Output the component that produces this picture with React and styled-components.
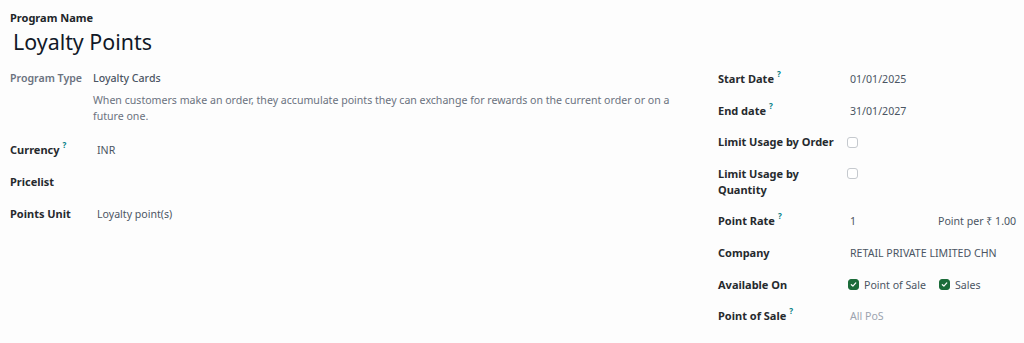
import React from "react";
import styled, { createGlobalStyle } from "styled-components";

const GlobalStyle = createGlobalStyle`
  html, body {
    margin: 0;
    padding: 0;
    background: #fdfdfd;
  }
  body {
    font-family: "Noto Sans", "Open Sans", sans-serif;
    font-size: 11px;
    color: #374151;
  }
`;

const Sheet = styled.div`
  width: 1024px;
  height: 343px;
  box-sizing: border-box;
  padding: 11px 10px 0 10px;
  background: #fdfdfd;
  overflow: hidden;
`;

const NameLabel = styled.div`
  font-weight: 700;
  font-size: 11px;
  line-height: 14px;
  color: #212529;
`;

const Title = styled.h1`
  margin: 3px 0 0 3px;
  font-size: 21.4px;
  line-height: 28px;
  font-weight: 400;
  color: #111827;
`;

const Columns = styled.div`
  display: grid;
  grid-template-columns: 708px 1fr;
  margin-top: 14px;
`;

const Group = styled.div`
  display: grid;
  grid-template-columns: ${(p) => p.$labelWidth}px 1fr;
  row-gap: ${(p) => p.$gap}px;
  align-content: start;
  padding-top: ${(p) => p.$top || 0}px;
`;

const Label = styled.div`
  font-weight: ${(p) => (p.$soft ? 600 : 700)};
  font-size: ${(p) => (p.$soft ? "10.6px" : "11px")};
  color: ${(p) => (p.$soft ? "#6b7280" : "#262a2e")};
  line-height: 16px;
  white-space: nowrap;
`;

const Help = styled.sup`
  color: #017e84;
  font-size: 8px;
  font-weight: 700;
  margin-left: 3px;
  vertical-align: top;
  line-height: 0;
  position: relative;
  top: 3px;
`;

const Value = styled.div`
  font-size: 10.6px;
  line-height: 16px;
  white-space: nowrap;
  font-weight: ${(p) => (p.$strong ? 500 : 400)};
  color: ${(p) => (p.$muted ? "#9ca3af" : "#4b5563")};
  padding-left: ${(p) => p.$inset || 0}px;
`;

const Description = styled.div`
  margin-top: 6px;
  margin-bottom: 2px;
  font-size: 10.6px;
  line-height: 16px;
  color: #6b7280;
  max-width: 585px;
`;

const RateRow = styled.div`
  display: grid;
  grid-template-columns: 88px 1fr;
`;

const CheckRow = styled.div`
  display: flex;
  align-items: center;
  height: 16px;
`;

const CheckItem = styled.label`
  display: flex;
  align-items: center;
  gap: 5px;
  width: ${(p) => (p.$width ? `${p.$width}px` : "auto")};
`;

const Box = styled.span`
  width: 11px;
  height: 11px;
  flex: none;
  box-sizing: border-box;
  border-radius: 3px;
  display: inline-flex;
  align-items: center;
  justify-content: center;
  margin-left: ${(p) => (p.$checked ? -2 : -3)}px;
  border: 1px solid ${(p) => (p.$checked ? "#1c6c3a" : "#c5c9ce")};
  background: ${(p) => (p.$checked ? "#1c6c3a" : "#fff")};
`;

const Check = ({ checked }) => (
  <Box $checked={checked}>
    {checked && (
      <svg width="7" height="7" viewBox="0 0 8 8">
        <path d="M1.5 4.2 L3.3 5.8 L6.6 2.2" fill="none" stroke="#fff" strokeWidth="1.4" strokeLinecap="round" strokeLinejoin="round" />
      </svg>
    )}
  </Box>
);

export default function App() {
  return (
    <Sheet>
      <GlobalStyle />
      <NameLabel>Program Name</NameLabel>
      <Title>Loyalty Points</Title>
      <Columns>
        <Group $labelWidth={83} $gap={16}>
          <Label $soft>Program Type</Label>
          <div>
            <Value $strong>Loyalty Cards</Value>
            <Description>
              When customers make an order, they accumulate points they can exchange for rewards on the current order or on a future one.
            </Description>
          </div>
          <Label>
            Currency<Help>?</Help>
          </Label>
          <Value $inset={4}>INR</Value>
          <Label>Pricelist</Label>
          <Value $inset={4}></Value>
          <Label>Points Unit</Label>
          <Value $inset={4}>Loyalty point(s)</Value>
        </Group>

        <Group $labelWidth={132} $gap={15.6} $top={1}>
          <Label>
            Start Date<Help>?</Help>
          </Label>
          <Value>01/01/2025</Value>
          <Label>
            End date<Help>?</Help>
          </Label>
          <Value>31/01/2027</Value>
          <Label>Limit Usage by Order</Label>
          <CheckRow>
            <Check />
          </CheckRow>
          <Label>
            Limit Usage by
            <br />
            Quantity
          </Label>
          <CheckRow>
            <Check />
          </CheckRow>
          <Label>
            Point Rate<Help>?</Help>
          </Label>
          <RateRow>
            <Value>1</Value>
            <Value>Point per ₹ 1.00</Value>
          </RateRow>
          <Label>Company</Label>
          <Value>RETAIL PRIVATE LIMITED CHN</Value>
          <Label>Available On</Label>
          <CheckRow>
            <CheckItem $width={91}>
              <Check checked />
              <Value>Point of Sale</Value>
            </CheckItem>
            <CheckItem>
              <Check checked />
              <Value>Sales</Value>
            </CheckItem>
          </CheckRow>
          <Label>
            Point of Sale<Help>?</Help>
          </Label>
          <Value $muted>All PoS</Value>
        </Group>
      </Columns>
    </Sheet>
  );
}
